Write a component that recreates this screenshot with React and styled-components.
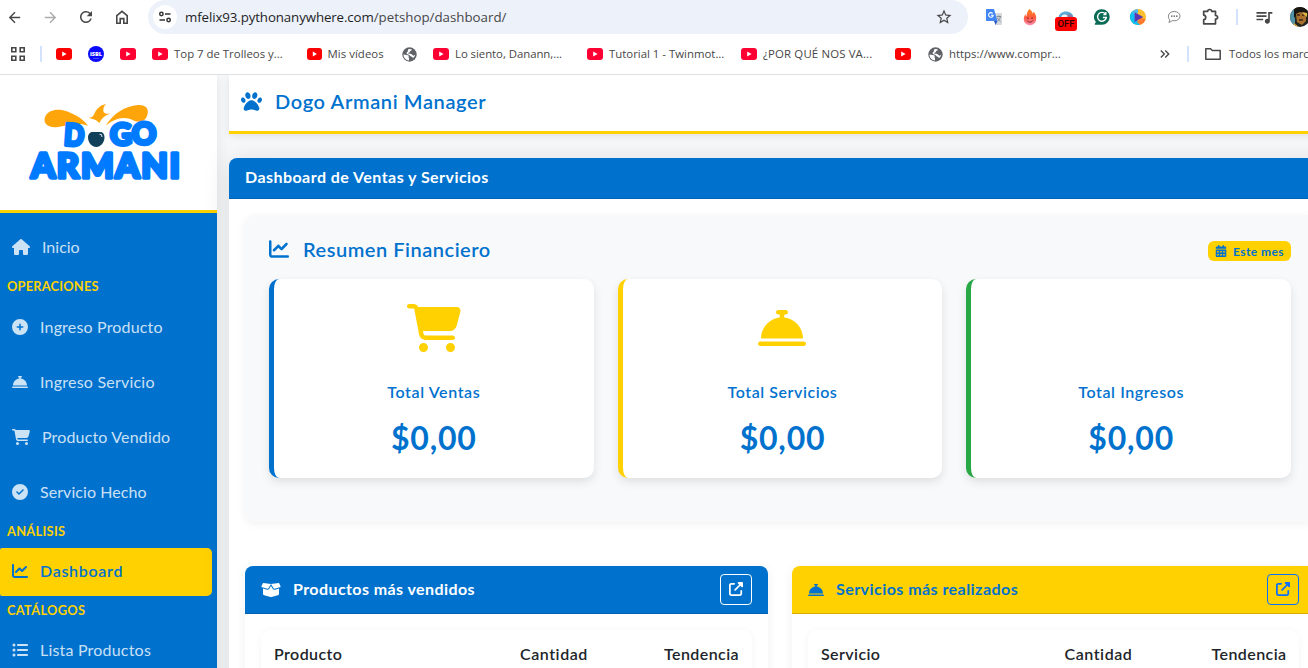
import React from 'react';
import styled, { createGlobalStyle } from 'styled-components';
import {
  FaPaw, FaHouse, FaCirclePlus, FaBellConcierge, FaCartShopping, FaCircleCheck,
  FaChartLine, FaListUl, FaBoxOpen, FaUpRightFromSquare, FaCalendarDays,
} from 'react-icons/fa6';
import {
  MdArrowBack, MdArrowForward, MdRefresh, MdStarBorder, MdQueueMusic,
  MdKeyboardDoubleArrowRight,
} from 'react-icons/md';

const blue = '#0072ce';
const yellow = '#ffd100';

const GlobalStyle = createGlobalStyle`
  * { box-sizing: border-box; }
  body { margin: 0; overflow: hidden; background: #fff; }
  svg { display: block; flex: none; }
`;

const Window = styled.div`
  display: flex;
  flex-direction: column;
  width: 1308px;
  height: 668px;
  overflow: hidden;
  font-family: Lato, sans-serif;
  font-size: 16px;
`;

const Label = styled.span`
  letter-spacing: ${(p) => p.$track || 0}px;
  white-space: nowrap;
`;

/* Font Awesome glyphs share a height; wide ones take a width of their own. */
const Icon = styled.span`
  flex: none;
  svg {
    height: ${(p) => p.$size || 16}px;
    width: ${(p) => p.$w || p.$size || 16}px;
  }
`;

/* ---------- browser chrome ---------- */

const Chrome = styled.header`
  flex: none;
  height: 75px;
  border-bottom: 1px solid #dfdfdf;
  background: #fff;
  font-family: 'Open Sans', sans-serif;
  color: #474747;
`;

const Toolbar = styled.div`
  display: flex;
  align-items: center;
  height: 34px;
  width: 1330px;
`;

const ToolCell = styled.div`
  display: flex;
  align-items: center;
  justify-content: center;
  width: 36px;
  height: 34px;
  color: ${(p) => (p.$muted ? '#ababab' : '#474747')};
`;

const NavGroup = styled.div`
  display: flex;
  width: 148px;
  margin-left: -4px;
  margin-right: 4px;
`;

const Omnibox = styled.div`
  display: flex;
  align-items: center;
  width: 820px;
  height: 34px;
  padding: 0 6px 0 5px;
  border-radius: 17px;
  background: #ecf1fa;
  font-size: 13.3px;
  line-height: 34px;
`;

const SiteButton = styled.div`
  display: flex;
  align-items: center;
  justify-content: center;
  width: 24px;
  height: 24px;
  border-radius: 50%;
  background: #fff;
  margin-right: 8px;
`;

const Host = styled.span`
  color: #1f1f1f;
  letter-spacing: -0.11px;
`;

const Path = styled.span`
  flex: 1;
`;

const Divider = styled.i`
  flex: none;
  width: 2px;
  height: 16px;
  margin: ${(p) => p.$m};
  background: #d3e3fd;
`;

const Extensions = styled.div`
  display: flex;
  align-items: center;
  padding-left: 8px;
`;

const Blocker = styled.div`
  position: relative;
  width: 22px;
  height: 16px;
`;

const OffBadge = styled.span`
  position: absolute;
  left: 0;
  top: 8px;
  width: 22px;
  height: 14px;
  border-radius: 3px;
  background: #f00;
  color: #2b0000;
  font: 500 9.5px/14px Roboto, sans-serif;
  text-align: center;
`;

const Bookmarks = styled.div`
  display: flex;
  align-items: center;
  width: 1345px;
  height: 40px;
  padding-left: 10px;
  font-size: 11.4px;
  line-height: 16px;
`;

const Bookmark = styled.div`
  display: flex;
  align-items: center;
  flex: none;
  gap: 6px;
  width: ${(p) => p.$w}px;
`;

const FolderLabel = styled(Label)`
  margin-left: 8px;
`;

const YouTube = ({ color = '#f03', w = 16 }) => (
  <svg width={w} height="12" viewBox="0 0 16 12" preserveAspectRatio="none">
    <rect width="16" height="12" rx="3" fill={color} />
    <path d="M6.2 3.4v5.2L10.6 6z" fill="#fff" />
  </svg>
);

const Globe = () => (
  <svg width="15" height="15" viewBox="0 0 15 15">
    <circle cx="7.5" cy="7.500" r="7.200" fill="#5f6368" />
    <path d="M1.500 7.400c2.300.3 4.300.3 5 1.200.6.900-.2 1.500.3 2.300.5.700.2 1.500.1 2.500C3.700 13 1.400 10.600 1.500 7.400z" fill="#fff" />
    <path d="M6.400 2.200c1.300-.5 2.600-.3 3.500.2-.1.900-.9 1-1.600 1.500-.6.500-.3 1.200-1 1.500-.8.300-1.300.3-1.200.9.200.800 2.400.1 3.600.9 1 .7 1.200 1.600 2.200 1.400.5-.1.900-.5 1.300-.8-.3 1.500-1.200 2.700-2.300 3.500-.1-.800-.5-1.200-1.200-1.500-1.200-.4-1.400-1.200-2.400-1.800C5.900 7.400 4.400 7.500 4.600 6.100c.1-.9 1.200-1.100 1.300-2 .1-.7-.1-1.400.5-1.900z" fill="#fff" />
  </svg>
);

const Isbl = () => (
  <svg width="16" height="16" viewBox="0 0 16 16">
    <circle cx="8" cy="8" r="8" fill="#0a0aff" />
    <text x="8" y="9.8" fontSize="5.6" fontWeight="800" fontFamily="Open Sans, sans-serif" textAnchor="middle" fill="#fff">iSBL</text>
    <path d="M5 12.5h6" stroke="#7a7aff" strokeWidth=".6" />
  </svg>
);

const HomeIcon = () => (
  <svg width="16" height="16" viewBox="0 0 16 16" fill="none" stroke="#474747" strokeWidth="1.6">
    <path d="M2.8 14.2V6.6L8 2.4l5.2 4.2v7.6H9.8V9.6H6.2v4.6z" />
  </svg>
);

const TuneIcon = () => (
  <svg width="14" height="14" viewBox="0 0 14 14" fill="none" stroke="#333" strokeWidth="1.5">
    <circle cx="3.4" cy="4" r="1.7" /><path d="M7 4h5.5M1.5 10H7" /><circle cx="10.6" cy="10" r="1.7" />
  </svg>
);

const TranslateIcon = () => (
  <svg width="16" height="16" viewBox="0 0 16 16">
    <path d="M6 4h9.2c.5 0 .8.3.8.8v10.4c0 .5-.3.8-.8.8H9.6z" fill="#d5d8dc" />
    <path d="M1 0h7l3.4 12H1c-.6 0-1-.4-1-1V1c0-.6.4-1 1-1z" fill="#4285f4" />
    <path d="M8 12h3.4L9.6 16z" fill="#2a56c6" />
    <path d="M6.700 4.500A2.300 2.300 0 1 0 7.200 6.200H5" stroke="#fff" strokeWidth="1.100" fill="none" />
    <path d="M10.6 7.6h4.6M12.8 6.4v1.2M14.4 7.8c-.4 2-1.6 3.400-3 4.400M11.300 8.800c.7 1.700 2 2.900 3.300 3.600" stroke="#6c7a89" strokeWidth=".8" fill="none" />
  </svg>
);

const FlameIcon = () => (
  <svg width="14" height="17" viewBox="0 0 14 17">
    <defs>
      <linearGradient id="flame" x1="0" y1="0" x2="0" y2="1">
        <stop offset="0" stopColor="#ff8a1f" /><stop offset=".5" stopColor="#ff5a3c" /><stop offset="1" stopColor="#ff8fb0" />
      </linearGradient>
    </defs>
    <path d="M6.300 0c2.400 1.500 3.300 3.200 3.300 4.700.6-.4.9-1.100.9-1.900C12.800 4.800 13.400 7.400 13.200 10c-.2 3.900-2.900 6.300-6.200 6.300S.8 13.800.8 10.300c0-2.200.7-3.900 1.700-5.100.1 1 .4 1.600 1.100 2C3.500 4.300 4.700 2.100 6.300 0z" fill="url(#flame)" />
    <circle cx="4.900" cy="9.300" r=".8" fill="#7a1a28" /><circle cx="9.100" cy="9.300" r=".8" fill="#7a1a28" />
    <path d="M4 11.500c1.400 2.200 4.600 2.200 6 0" stroke="#7a1a28" strokeWidth="1" fill="none" />
  </svg>
);

const CloudIcon = () => (
  <svg width="22" height="14" viewBox="0 0 22 14">
    <path d="M3.500 9C3.500 5 7 2.500 11 2.500S18.500 5 18.500 9z" fill="#5aa9d6" />
    <path d="M9 9c2-4 6-4.500 7.500-3L18 9z" fill="#c9436a" opacity=".45" />
    <path d="M6 9c.5-4 5-4.500 7-1.500z" fill="#eef5fa" />
  </svg>
);

const GrammarlyIcon = () => (
  <svg width="16" height="16" viewBox="0 0 16 16">
    <path d="M8 .3A7.700 7.700 0 1 1 8 15.700H1.200c-.6 0-.7-.6-.4-1l1.100-1.600A7.700 7.700 0 0 1 8 .3z" fill="#0b6b57" />
    <path d="M11.400 5A4.400 4.400 0 1 0 12.300 8.700M13 8.500H8.900M11.800 2.900v2.700H9.400" stroke="#fff" strokeWidth="1.400" fill="none" />
  </svg>
);

const PlayIcon = () => (
  <svg width="16" height="16" viewBox="0 0 16 16">
    <circle cx="8" cy="8" r="8" fill="#fbc02d" />
    <path d="M5 2.500 2.300 2.300A8 8 0 0 0 8 16c1 0 1.500-.2 2-.3L6 9z" fill="#12c1f3" />
    <path d="M8 0a8 8 0 0 0-6 2.700l3 4 3-3z" fill="#4fb8f0" />
    <path d="M10 15.700A8 8 0 0 0 15.600 10L11 9l-4 4z" fill="#ff7a2f" />
    <path d="M4.600 3.300v9.600L13.200 8z" fill="#5e35b1" />
  </svg>
);

const BubbleIcon = () => (
  <svg width="14" height="14" viewBox="0 0 14 14" fill="none" stroke="#777" strokeWidth=".9">
    <path d="M7.200 1.500c3.300 0 5.800 2 5.800 4.600s-2.500 4.700-5.800 4.700c-.7 0-1.300-.1-1.900-.2-.9.900-2 1.500-3.500 1.700.6-.7 1-1.500 1-2.500C1.800 9 1.400 7.700 1.400 6.100c0-2.600 2.500-4.600 5.800-4.600z" />
    <path d="M4 6.200h1.500M6.500 6.200H8M9 6.200h1.500" stroke="#555" strokeWidth="1.200" />
  </svg>
);

const PuzzleIcon = () => (
  <svg width="18" height="18" viewBox="0 0 18 18" fill="none" stroke="#474747" strokeWidth="1.700" strokeLinejoin="round">
    <path d="M2.700 3.300h4c0-2.400 4-2.400 4 0h3.800v4.200c2.800 0 2.800 3.600 0 3.600v4.700H2.700v-4.100c2.700-.2 2.700-4.300 0-4.500z" />
  </svg>
);

const Avatar = () => (
  <svg width="20" height="20" viewBox="0 0 20 20">
    <defs><clipPath id="face"><circle cx="10" cy="10" r="10" /></clipPath></defs>
    <g clipPath="url(#face)">
      <rect width="20" height="20" fill="#22251f" />
      <path d="M0 2h5v16H0z" fill="#4f93a8" />
      <path d="M4 1c3-2 10-2 13 2v6l-3-3-7 1-3 4z" fill="#17150f" />
      <path d="M6 7l4-2 6 2v7l-4 4-5-3z" fill="#a8712f" />
      <path d="M7 8h3M12 8h3M9 13h4" stroke="#3b2413" strokeWidth="1.300" />
      <path d="M12 5l5 1v4l-3-2z" fill="#e0b545" />
      <path d="M4 16l5 4H2z" fill="#d8a73a" />
    </g>
  </svg>
);

const AppsIcon = () => (
  <svg width="16" height="16" viewBox="0 0 16 16" fill="none" stroke="#474747" strokeWidth="1.600">
    <path d="M1.800 1.800h4v4h-4zM10.200 1.800h4v4h-4zM1.800 10.200h4v4h-4zM10.200 10.200h4v4h-4z" />
  </svg>
);

const FolderIcon = () => (
  <svg width="16" height="14" viewBox="0 0 16 14" fill="none" stroke="#474747" strokeWidth="1.500" strokeLinejoin="round">
    <path d="M.8 12.200V1.800h4.800l1.700 1.700h7.900v8.700z" />
  </svg>
);

/* ---------- page frame ---------- */

const Page = styled.div`
  flex: 1;
  display: flex;
  min-height: 0;
  overflow: hidden;
  background: #f8f9fb;
`;

const Sidebar = styled.aside`
  flex: none;
  width: 217px;
  height: 620px;
  background: ${blue};
  box-shadow: 0 2px 14px rgba(0, 0, 0, 0.1);
`;

const Brand = styled.div`
  height: 138px;
  padding: 28px 0 0 28px;
  background: #fff;
  border-bottom: 3px solid ${yellow};
`;

const Nav = styled.nav`
  padding-top: 11px;
`;

const NavItem = styled.div`
  display: flex;
  align-items: center;
  gap: 12px;
  width: 212px;
  height: 48px;
  padding: 0 0 2px 12px;
  border-radius: 2px 5px 5px 2px;
  background: ${(p) => (p.$active ? yellow : 'transparent')};
  color: ${(p) => (p.$active ? blue : 'rgba(255,255,255,.8)')};
  font-weight: ${(p) => (p.$active ? 600 : 400)};
  line-height: 46px;
  & + & { margin-top: 7px; }
`;

const NavHeading = styled.div`
  height: ${(p) => p.$h}px;
  padding-left: 7px;
  color: ${yellow};
  font-size: 12.8px;
  font-weight: 700;
  line-height: ${(p) => p.$lh}px;
`;

const Main = styled.main`
  position: relative;
  flex: none;
  width: 1102px;
  margin-left: 12px;
`;

const TopBar = styled.div`
  display: flex;
  align-items: center;
  gap: 13px;
  height: 59px;
  padding: 0 0 4px 12px;
  border-bottom: 3px solid ${yellow};
  background: #fff;
  box-shadow: 0 2px 8px rgba(0, 0, 0, 0.1);
  color: ${blue};
  font-size: 20px;
  font-weight: 600;
`;

const Panel = styled.section`
  height: 600px;
  margin-top: 24px;
  border-radius: 8px;
  background: #fff;
  box-shadow: 0 2px 28px rgba(0, 0, 0, 0.12);
`;

const PanelTitle = styled.h1`
  margin: 0;
  height: 41px;
  padding-left: 16px;
  border-bottom: 1px solid #0063b3;
  border-radius: 8px 8px 0 0;
  background: ${blue};
  color: #fff;
  font-size: 16px;
  font-weight: 700;
  line-height: 38px;
`;

const PanelBody = styled.div`
  padding: 16px;
`;

const Summary = styled.div`
  height: 307px;
  padding: 24px;
  border-radius: 10px;
  background: #f8f9fb;
  box-shadow: 0 2px 10px rgba(0, 0, 0, 0.06);
`;

const SummaryHead = styled.div`
  display: flex;
  align-items: center;
  justify-content: space-between;
  height: 24px;
  margin-bottom: 16px;
`;

const SummaryTitle = styled.h2`
  display: flex;
  align-items: center;
  gap: 14px;
  margin: 0;
  padding-bottom: 5px;
  color: ${blue};
  font-size: 20px;
  font-weight: 600;
`;

const Period = styled.span`
  display: flex;
  align-items: center;
  gap: 6px;
  height: 20px;
  width: 83px;
  padding-left: 7px;
  border-radius: 6px;
  background: ${yellow};
  color: ${blue};
  font-size: 12px;
  font-weight: 700;
  line-height: 19px;
`;

const Stats = styled.div`
  display: grid;
  grid-template-columns: repeat(3, 1fr);
  gap: 24px;
`;

const Stat = styled.div`
  display: flex;
  flex-direction: column;
  align-items: center;
  height: 199px;
  border-left: 5px solid ${(p) => p.$accent};
  border-radius: 10px;
  background: #fff;
  box-shadow: 0 4px 10px rgba(0, 0, 0, 0.1);
  color: ${blue};
`;

const StatIcon = styled.div`
  height: 92px;
  padding-top: 25px;
  color: ${yellow};
`;

const StatName = styled.div`
  height: 44px;
  font-weight: 600;
  line-height: 42px;
`;

const StatValue = styled.div`
  font-size: 32px;
  font-weight: 700;
  line-height: 46px;
`;

const Rankings = styled.div`
  display: grid;
  grid-template-columns: 1fr 1fr;
  gap: 24px;
  margin-top: 44px;
`;

const Ranking = styled.section`
  height: 200px;
  border-radius: 8px;
  background: #fff;
  box-shadow: 0 2px 12px rgba(0, 0, 0, 0.06);
`;

const RankingHead = styled.div`
  display: flex;
  align-items: center;
  gap: 12px;
  height: 48px;
  padding: 0 16px;
  border-bottom: 1px solid rgba(0, 0, 0, 0.16);
  border-radius: 8px 8px 0 0;
  background: ${(p) => (p.$tone === 'yellow' ? yellow : blue)};
  color: ${(p) => (p.$tone === 'yellow' ? blue : '#fff')};
  font-weight: 700;
  line-height: 46px;
`;

const RankingName = styled(Label)`
  padding-bottom: 1px;
`;

const OpenButton = styled.button`
  display: flex;
  align-items: center;
  justify-content: center;
  width: 32px;
  height: 31px;
  margin-left: auto;
  padding: 0 0 1px;
  border: 1px solid ${(p) => p.$color};
  border-radius: 4px;
  background: transparent;
  color: ${(p) => p.$color};
`;

const TableBox = styled.div`
  display: grid;
  grid-template-columns: ${(p) => p.$cols};
  height: 120px;
  margin: 16px;
  padding-left: 13px;
  border-radius: 10px;
  box-shadow: 0 1px 8px rgba(0, 0, 0, 0.045);
  color: #212529;
  font-weight: 600;
  line-height: 48px;
`;

const Logo = () => (
  <svg width="156" height="80" viewBox="0 0 156 80">
    <g fill="#fda50a">
      <path d="M60 23C52 19 42 22 30 24 20 25.500 14 20 17.500 13c3.500-6.500 12.500-8 22-4.500 9 3.500 17 8.500 20.500 14.500z" />
      <path d="M78 22.500c7-12 19-19.500 32-20.500 9-.5 11.500 5 9 11-2 5.500-7 7-13.500 4.500C96 13 87 15 78 22.500z" />
      <path d="M58.500 14.500c4 .8 6-.3 7.500-3 2-5 5-9 12-10.500-2.500 2.600-3 5-2.500 8 2 2 4 2 6.500 1.500-5 2.500-8.500 4.500-10.500 9.500-4-4-8-4.500-13-5.500z" />
    </g>
    <g fill="#007bff" stroke="#007bff" strokeWidth="3.600" strokeLinejoin="round" fontFamily="Lato, sans-serif" fontWeight="900">
      <text fontSize="30" transform="translate(35.500 42) rotate(4)" textLength="20" lengthAdjust="spacingAndGlyphs">D</text>
      <text fontSize="30" transform="translate(82.500 42.500) rotate(-2)" textLength="46" lengthAdjust="spacingAndGlyphs">GO</text>
      <text fontSize="34.500" x="3" y="74.500" textLength="149" lengthAdjust="spacing">ARMANI</text>
    </g>
    <path d="M60 34.500c0-3.500 2-5.500 5-5.500h7c3 0 4.500 2 4.500 5.500 0 5-4 9.500-8.300 9.500S60 39.500 60 34.500z" fill="#12405a" />
    <path d="M71.500 31.300l2 .4.500 2.300" fill="none" stroke="#fff" strokeWidth=".9" />
  </svg>
);

const stats = [
  { name: 'Total Ventas', accent: blue, icon: <FaCartShopping />, w: 54, track: 0.61 },
  { name: 'Total Servicios', accent: yellow, icon: <FaBellConcierge />, w: 48, track: 0.55 },
  { name: 'Total Ingresos', accent: '#28a745', icon: null, w: 48, track: 0.6 },
];

export default function App() {
  return (
    <Window>
      <GlobalStyle />
      <Chrome>
        <Toolbar>
          <NavGroup>
            <ToolCell><MdArrowBack size={17} /></ToolCell>
            <ToolCell $muted><MdArrowForward size={17} /></ToolCell>
            <ToolCell><MdRefresh size={18} /></ToolCell>
            <ToolCell><HomeIcon /></ToolCell>
          </NavGroup>
          <Omnibox>
            <SiteButton><TuneIcon /></SiteButton>
            <Host>mfelix93.pythonanywhere.com</Host>
            <Path>/petshop/dashboard/</Path>
            <ToolCell><MdStarBorder size={18} /></ToolCell>
          </Omnibox>
          <Extensions>
            <ToolCell><TranslateIcon /></ToolCell>
            <ToolCell><FlameIcon /></ToolCell>
            <ToolCell><Blocker><CloudIcon /><OffBadge>OFF</OffBadge></Blocker></ToolCell>
            <ToolCell><GrammarlyIcon /></ToolCell>
            <ToolCell><PlayIcon /></ToolCell>
            <ToolCell><BubbleIcon /></ToolCell>
            <ToolCell><PuzzleIcon /></ToolCell>
            <Divider $m="0 8px 0 8px" />
            <ToolCell><MdQueueMusic size={20} /></ToolCell>
            <ToolCell><Avatar /></ToolCell>
          </Extensions>
        </Toolbar>
        <Bookmarks>
          <AppsIcon />
          <Divider $m="0 14px 0 14px" />
          <Bookmark $w={32}><YouTube color="#f00" /></Bookmark>
          <Bookmark $w={32}><Isbl /></Bookmark>
          <Bookmark $w={32}><YouTube /></Bookmark>
          <Bookmark $w={154.5}><YouTube /><Label>Top 7 de Trolleos y...</Label></Bookmark>
          <Bookmark $w={95}><YouTube color="#f00" w={15} /><Label $track={0.05}>Mis vídeos</Label></Bookmark>
          <Bookmark $w={31.5}><Globe /></Bookmark>
          <Bookmark $w={154}><YouTube /><Label $track={-0.05}>Lo siento, Danann,...</Label></Bookmark>
          <Bookmark $w={154}><YouTube /><Label>Tutorial 1 - Twinmot...</Label></Bookmark>
          <Bookmark $w={154}><YouTube /><Label $track={0.15}>¿POR QUÉ NOS VA...</Label></Bookmark>
          <Bookmark $w={33}><YouTube color="#f00" /></Bookmark>
          <Bookmark $w={229}><Globe /><Label>https://www.compr...</Label></Bookmark>
          <MdKeyboardDoubleArrowRight size={16} />
          <Divider $m="0 16px 0 14px" />
          <FolderIcon />
          <FolderLabel $track={-0.05}>Todos los marcadores</FolderLabel>
        </Bookmarks>
      </Chrome>

      <Page>
        <Sidebar>
          <Brand><Logo /></Brand>
          <Nav>
            <NavItem><Icon $w={18}><FaHouse /></Icon><Label>Inicio</Label></NavItem>
            <NavHeading $h={32} $lh={29}><Label $track={0.22}>OPERACIONES</Label></NavHeading>
            <NavItem><Icon><FaCirclePlus /></Icon><Label $track={0.17}>Ingreso Producto</Label></NavItem>
            <NavItem><Icon><FaBellConcierge /></Icon><Label $track={0.22}>Ingreso Servicio</Label></NavItem>
            <NavItem><Icon $w={18}><FaCartShopping /></Icon><Label $track={0.16}>Producto Vendido</Label></NavItem>
            <NavItem><Icon><FaCircleCheck /></Icon><Label $track={0.07}>Servicio Hecho</Label></NavItem>
            <NavHeading $h={31} $lh={28}><Label $track={0.3}>ANÁLISIS</Label></NavHeading>
            <NavItem $active><Icon><FaChartLine /></Icon><Label $track={0.7}>Dashboard</Label></NavItem>
            <NavHeading $h={31} $lh={28}><Label $track={0.32}>CATÁLOGOS</Label></NavHeading>
            <NavItem><Icon><FaListUl /></Icon><Label $track={0.2}>Lista Productos</Label></NavItem>
          </Nav>
        </Sidebar>

        <Main>
          <TopBar>
            <Icon $size={21}><FaPaw /></Icon>
            <Label $track={0.62}>Dogo Armani Manager</Label>
          </TopBar>
          <Panel>
            <PanelTitle><Label $track={0.45}>Dashboard de Ventas y Servicios</Label></PanelTitle>
            <PanelBody>
              <Summary>
                <SummaryHead>
                  <SummaryTitle>
                    <Icon $size={20}><FaChartLine /></Icon>
                    <Label $track={0.52}>Resumen Financiero</Label>
                  </SummaryTitle>
                  <Period>
                    <Icon $size={12}><FaCalendarDays /></Icon>
                    <Label $track={0.42}>Este mes</Label>
                  </Period>
                </SummaryHead>
                <Stats>
                  {stats.map((s) => (
                    <Stat key={s.name} $accent={s.accent}>
                      <StatIcon><Icon $size={48} $w={s.w}>{s.icon}</Icon></StatIcon>
                      <StatName><Label $track={s.track}>{s.name}</Label></StatName>
                      <StatValue><Label $track={0.8}>$0,00</Label></StatValue>
                    </Stat>
                  ))}
                </Stats>
              </Summary>
              <Rankings>
                <Ranking>
                  <RankingHead>
                    <Icon $w={20}><FaBoxOpen /></Icon>
                    <RankingName $track={0.42}>Productos más vendidos</RankingName>
                    <OpenButton $color="#fff"><Icon $size={14}><FaUpRightFromSquare /></Icon></OpenButton>
                  </RankingHead>
                  <TableBox $cols="246px 144px 1fr">
                    <Label $track={0.42}>Producto</Label>
                    <Label $track={0.56}>Cantidad</Label>
                    <Label $track={0.42}>Tendencia</Label>
                  </TableBox>
                </Ranking>
                <Ranking>
                  <RankingHead $tone="yellow">
                    <Icon><FaBellConcierge /></Icon>
                    <RankingName $track={0.45}>Servicios más realizados</RankingName>
                    <OpenButton $color="#0d6efd"><Icon $size={14}><FaUpRightFromSquare /></Icon></OpenButton>
                  </RankingHead>
                  <TableBox $cols="243.5px 147px 1fr">
                    <Label $track={0.4}>Servicio</Label>
                    <Label $track={0.56}>Cantidad</Label>
                    <Label $track={0.42}>Tendencia</Label>
                  </TableBox>
                </Ranking>
              </Rankings>
            </PanelBody>
          </Panel>
        </Main>
      </Page>
    </Window>
  );
}
